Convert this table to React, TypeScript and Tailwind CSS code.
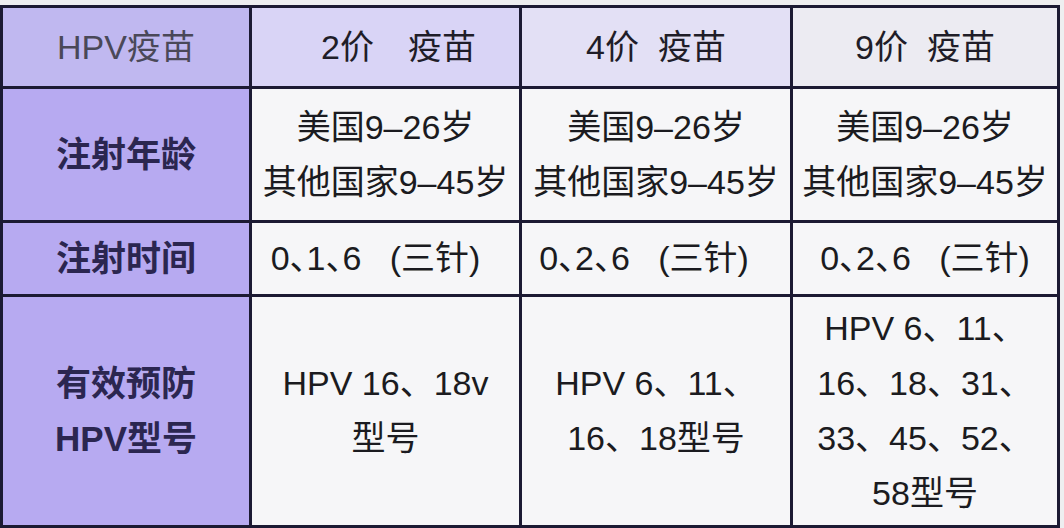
const FONT = "font-['Liberation_Sans','Noto_Sans_CJK_SC',sans-serif]";

function HeadCell({ children, bg, tone }: { children: React.ReactNode; bg: string; tone: string }) {
    return (
        <div className={`flex items-center justify-center whitespace-pre text-[34px] ${bg} ${tone}`}>
            {children}
        </div>
    );
}

function SideCell({ lines }: { lines: string[] }) {
    return (
        <div className="flex flex-col items-center justify-center bg-[#b7aaf1] text-[35px] font-bold leading-[55px] text-[#2b2650]">
            {lines.map((l) => (
                <span key={l}>{l}</span>
            ))}
        </div>
    );
}

function BodyCell({ lines, className = '' }: { lines: React.ReactNode[]; className?: string }) {
    return (
        <div className={`flex flex-col items-center justify-center bg-[#f6f6f8] text-[34px] leading-[55px] text-[#1b1b20] ${className}`}>
            {lines.map((l, i) => (
                <span key={i} className="whitespace-pre">
                    {l}
                </span>
            ))}
        </div>
    );
}

const ages = ['美国9–26岁', '其他国家9–45岁'];

function Shots({ n }: { n: string }) {
    // narrow commas, ascii brackets
    return (
        <>
            <span className="[font-feature-settings:'halt']">{`0、${n}、6`}</span>
            {'   (三针)'}
        </>
    );
}

export default function App() {
    return (
        <div className={`w-[1064px] h-[528px] bg-[#eeeef0] pt-[5px] ${FONT}`}>
            <div className="grid w-[1060px] grid-cols-[246px_267px_268px_264px] grid-rows-[78px_131px_71px_228px] gap-[3px] bg-[#1c1a33] p-[3px]">
                {/* header row */}
                <HeadCell bg="bg-[#c0b8f0]" tone="text-[#4a4858]">HPV疫苗</HeadCell>
                <HeadCell bg="bg-[#d9d4f6] pl-[26px]" tone="text-[#1f1d28]">{'2价\u3000疫苗'}</HeadCell>
                <HeadCell bg="bg-[#e3e0f5]" tone="text-[#1f1d28]">{'4价  疫苗'}</HeadCell>
                <HeadCell bg="bg-[#ecebf2]" tone="text-[#1f1d28]">{'9价  疫苗'}</HeadCell>

                {/* age */}
                <SideCell lines={['注射年龄']} />
                <BodyCell lines={ages} />
                <BodyCell lines={ages} />
                <BodyCell lines={ages} />

                {/* schedule */}
                <SideCell lines={['注射时间']} />
                <BodyCell lines={[<Shots n="1" />]} className="pr-[20px]" />
                <BodyCell lines={[<Shots n="2" />]} className="pr-[24px]" />
                <BodyCell lines={[<Shots n="2" />]} />

                {/* types */}
                <SideCell lines={['有效预防', 'HPV型号']} />
                <BodyCell lines={['HPV 16、18v', '型号']} />
                <BodyCell lines={['HPV 6、11、', '16、18型号']} />
                <BodyCell lines={['HPV 6、11、', '16、18、31、', '33、45、52、', '58型号']} />
            </div>
        </div>
    );
}
